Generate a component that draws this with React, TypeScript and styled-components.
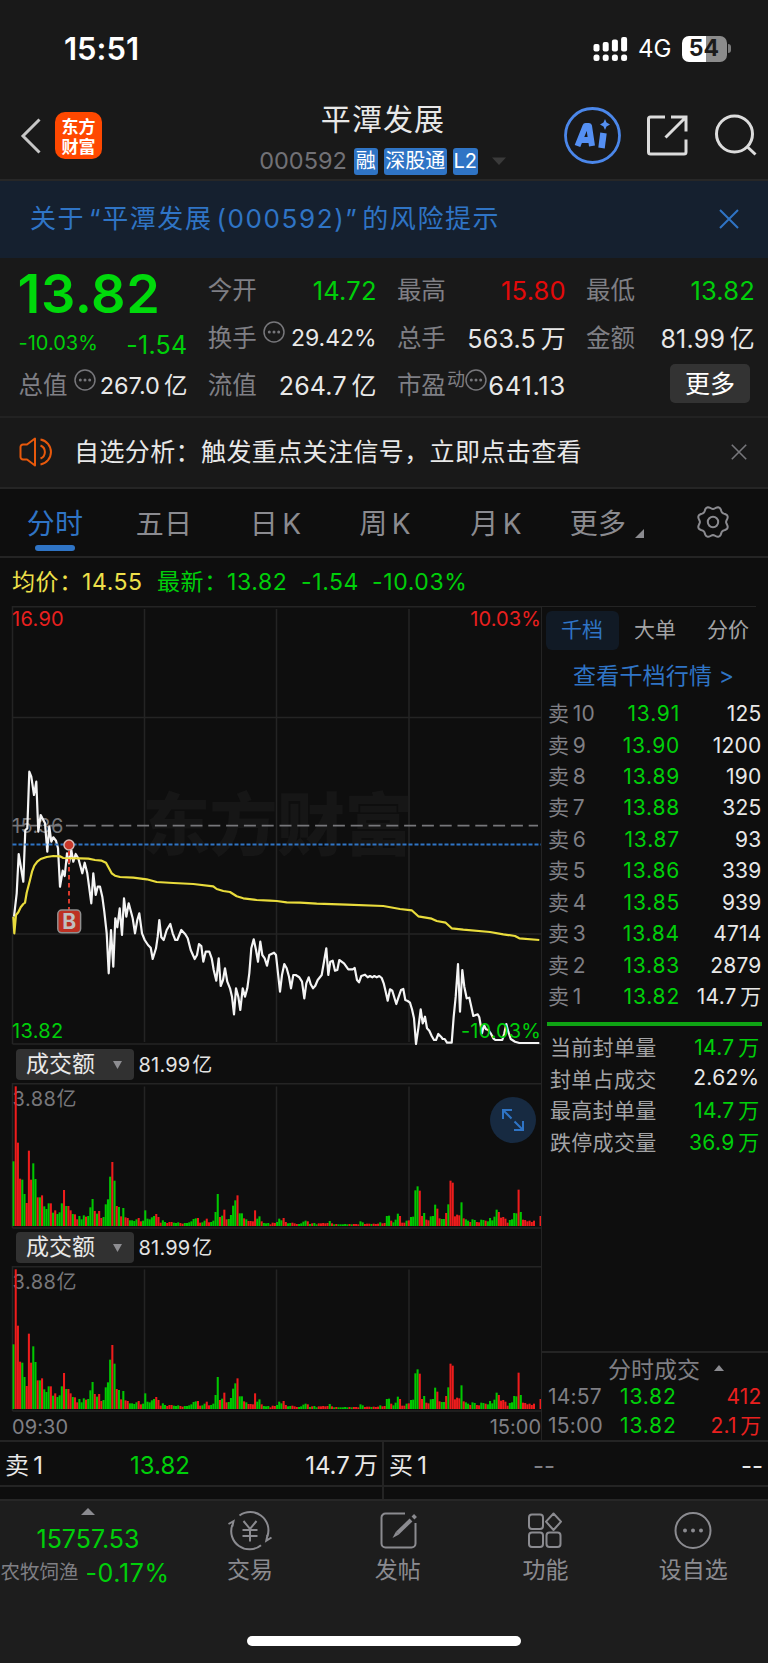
import React from 'react';
import styled, { createGlobalStyle } from 'styled-components';

const C = {
  up: '#e9201f',
  down: '#00cf0a',
  blue: '#2f74c5',
  text: '#e8e8e8',
  dim: '#7f7f84',
  line: '#242424',
  panel: '#191919',
  base: '#0e0e0e',
};

const Global = createGlobalStyle`
  * { box-sizing: border-box; }
  html, body { margin: 0; padding: 0; background: ${C.base}; }
  body { font-family: Inter, "Noto Sans CJK SC", sans-serif; font-feature-settings: "calt" 0; }
  svg { display: block; flex: none; }
`;

const Screen = styled.div`
  width: 768px;
  height: 1663px;
  overflow: hidden;
  display: flex;
  flex-direction: column;
  background: ${C.base};
  color: ${C.text};
`;

const Txt = styled.span<{ $s?: number; $c?: string; $ls?: number; $w?: number; $ws?: number; $mt?: number }>`
  font-size: ${(p) => p.$s ?? 24}px;
  color: ${(p) => p.$c ?? C.text};
  letter-spacing: ${(p) => p.$ls ?? 0}px;
  word-spacing: ${(p) => p.$ws ?? -2.5}px;
  font-weight: ${(p) => p.$w ?? 400};
  margin-top: ${(p) => p.$mt ?? 0}px;
  line-height: 1.2;
  white-space: pre;
`;
const Grow = styled.div`
  flex: 1;
`;

/* ---------- status bar ---------- */
const StatusBar = styled.div`
  height: 98px;
  flex: none;
  display: flex;
  align-items: center;
  padding: 0 37px 0 64px;
  background: ${C.panel};
`;
const StatusRight = styled.div`
  margin-left: auto;
  display: flex;
  align-items: center;
`;
const Network = styled.span`
  margin-left: 10px;
  font-size: 24px;
  line-height: 1.2;
  color: #fff;
`;
const Battery = styled.div`
  width: 45px;
  height: 26px;
  margin-left: 10px;
  border-radius: 7px;
  display: flex;
  align-items: center;
  justify-content: center;
  background: linear-gradient(90deg, #fff 0 54%, #8c8c8c 54%);
`;
const BatteryNub = styled.div`
  width: 3px;
  height: 9px;
  margin-left: 1.5px;
  border-radius: 0 3px 3px 0;
  background: #7c7c7c;
`;

/* ---------- header ---------- */
const Header = styled.div`
  height: 83px;
  flex: none;
  display: grid;
  grid-template-columns: 200px 1fr 204px;
  background: ${C.panel};
  border-bottom: 2px solid #272727;
`;
const HeaderLeft = styled.div`
  display: flex;
  gap: 14px;
  padding: 14px 0 0 20px;
`;
const Logo = styled.div`
  width: 47px;
  height: 47px;
  border-radius: 10px;
  background: #ff4800;
  display: flex;
  flex-direction: column;
  align-items: center;
  justify-content: center;
`;
const LogoLine = styled.span`
  font: 700 17px/19.5px "Noto Sans CJK SC", sans-serif;
  color: #fff;
`;
const HeaderMid = styled.div`
  display: flex;
  flex-direction: column;
  align-items: center;
  padding: 3px 0 0 2px;
`;
const CodeRow = styled.div`
  display: flex;
  align-items: center;
  margin: 10px 0 0 -1px;
  height: 28px;
`;
const Tag = styled.span<{ $w: number; $ml: number }>`
  width: ${(p) => p.$w}px;
  height: 27px;
  margin-left: ${(p) => p.$ml}px;
  border-radius: 3px;
  background: ${C.blue};
  color: #fff;
  font-size: 20px;
  line-height: 27px;
  text-align: center;
  white-space: nowrap;
`;
const HeaderRight = styled.div`
  display: flex;
  align-items: flex-start;
  padding-top: 8px;
`;

/* ---------- notice ---------- */
const Notice = styled.div`
  height: 77px;
  flex: none;
  display: flex;
  align-items: center;
  justify-content: space-between;
  padding: 0 29px 1px 30px;
  background: #15202f;
`;

/* ---------- quote stats ---------- */
const Stats = styled.div`
  height: 160px;
  flex: none;
  display: grid;
  grid-template-columns: repeat(4, 169px);
  grid-template-rows: 48px 47px 48px;
  column-gap: 20.2px;
  padding: 9px 0 0 18.5px;
  background: ${C.panel};
  border-bottom: 2px solid #222;
`;
const PriceCell = styled.div`
  grid-row: span 2;
  display: flex;
  flex-direction: column;
  padding-top: 8px;
`;
const BigPrice = styled.div`
  font-size: 54px;
  line-height: 37px;
  font-weight: 600;
  letter-spacing: 0.6px;
  color: #00d90b;
  margin-left: -1px;
`;
const ChangeRow = styled.div`
  display: flex;
  justify-content: space-between;
  align-items: center;
  margin-top: 16px;
  height: 30px;
`;
const StatCell = styled.div`
  display: flex;
  align-items: center;
  justify-content: space-between;
`;
const StatLabel = styled.div`
  display: flex;
  align-items: center;
`;
const Raised = styled.div<{ $x?: number }>`
  display: flex;
  align-items: center;
  margin: -12px 0 0 ${(p) => p.$x ?? 6}px;
`;
const MoreButton = styled.div`
  width: 80px;
  height: 39px;
  margin: 2px 5px 0 auto;
  border-radius: 5px;
  background: #333;
  display: flex;
  align-items: center;
  justify-content: center;
`;

/* ---------- signal bar ---------- */
const SignalBar = styled.div`
  height: 71px;
  flex: none;
  display: flex;
  align-items: center;
  padding: 0 21px 1px 19px;
  background: ${C.panel};
  border-bottom: 2px solid #252525;
`;

/* ---------- period tabs ---------- */
const Tabs = styled.div`
  height: 69px;
  flex: none;
  display: flex;
  border-bottom: 2px solid ${C.line};
`;
const Tab = styled.div<{ $w: number; $on?: boolean }>`
  position: relative;
  width: ${(p) => p.$w}px;
  padding-bottom: 2px;
  display: flex;
  align-items: center;
  justify-content: center;
  font-size: 28px;
  letter-spacing: 0.3px;
  word-spacing: -4px;
  white-space: pre;
  color: ${(p) => (p.$on ? C.blue : '#8b8b90')};
  &::after {
    content: '';
    display: ${(p) => (p.$on ? 'block' : 'none')};
    position: absolute;
    left: 35px;
    bottom: 5px;
    width: 40px;
    height: 6px;
    border-radius: 3px;
    background: ${C.blue};
  }
`;
const Legend = styled.div`
  height: 48px;
  flex: none;
  display: flex;
  align-items: center;
  padding-left: 12px;
`;
const LegendItem = styled.span<{ $w: number; $c: string }>`
  width: ${(p) => p.$w}px;
  color: ${(p) => p.$c};
  font-size: 23px;
  line-height: 28px;
  letter-spacing: 0.6px;
  white-space: nowrap;
`;

/* ---------- main area ---------- */
const Main = styled.div`
  height: 836px;
  flex: none;
  display: grid;
  grid-template-columns: 542px 226px;
  border-bottom: 2px solid ${C.line};
`;
const Charts = styled.div`
  display: flex;
  flex-direction: column;
  border-right: 1px solid ${C.line};
`;
const IndicatorRow = styled.div<{ $h: number; $pt: number }>`
  height: ${(p) => p.$h}px;
  display: flex;
  align-items: flex-start;
  padding: ${(p) => p.$pt}px 0 0 16px;
`;
const IndicatorPick = styled.div`
  width: 118px;
  height: 31px;
  margin-right: 4.5px;
  padding: 0 12px 0 10px;
  border-radius: 4px;
  background: #313131;
  display: flex;
  align-items: center;
  justify-content: space-between;
`;
const IndicatorValue = styled.span`
  font-size: 20px;
  line-height: 33px;
  letter-spacing: 0.2px;
  word-spacing: -4px;
  color: #e3e3e3;
`;
const VolumeBox = styled.div`
  position: relative;
`;
const Expand = styled.div`
  position: absolute;
  left: 490px;
  top: 14px;
  width: 46px;
  height: 46px;
  border-radius: 50%;
  background: #172a41;
  display: flex;
  align-items: center;
  justify-content: center;
`;
const TimeAxis = styled.div`
  display: flex;
  justify-content: space-between;
  padding: 3px 0 0 12px;
`;

/* ---------- order book ---------- */
const Side = styled.div`
  display: flex;
  flex-direction: column;
`;
const SideTabs = styled.div`
  display: flex;
  height: 45px;
  width: 214px;
  padding: 4px 0 0 3.5px;
  border-top: 1px solid ${C.line};
`;
const SideTab = styled.div<{ $on?: boolean }>`
  width: 73px;
  height: 39px;
  flex: none;
  border-radius: 6px;
  text-align: center;
  line-height: 38px;
  font-size: 21px;
  color: ${(p) => (p.$on ? C.blue : '#a3a3a5')};
  background: ${(p) => (p.$on ? '#111a25' : 'transparent')};
`;
const DepthLink = styled.div`
  height: 47px;
  padding-left: 31px;
  line-height: 50px;
  font-size: 23px;
  letter-spacing: 0.2px;
  color: ${C.blue};
  white-space: pre;
`;
const BookRow = styled.div<{ $h?: number; $mid?: number }>`
  height: ${(p) => p.$h ?? 31.45}px;
  display: grid;
  grid-template-columns: 56px ${(p) => p.$mid ?? 76}px 1fr;
  align-items: center;
  padding: 0 6.5px 0 6px;
  font-size: 21px;
  letter-spacing: 0.2px;
  word-spacing: -2.5px;
  line-height: 1.2;
  white-space: nowrap;
  & > :not(:first-child) { text-align: right; }
  & > :nth-child(2) { letter-spacing: 0.8px; }
`;
const Cell = styled.span<{ $c: string }>`
  color: ${(p) => p.$c};
`;
const GreenRule = styled.div`
  height: 4px;
  margin: 9.5px 6px 4.5px 5px;
  background: #0fa414;
`;
const InfoRow = styled.div`
  height: 31.5px;
  display: flex;
  align-items: center;
  justify-content: space-between;
  padding: 0 8.5px 0 8px;
  font-size: 21px;
  letter-spacing: 0.3px;
  word-spacing: -2.5px;
  color: #a3a3a5;
  white-space: nowrap;
`;
const Ticks = styled.div`
  margin-top: auto;
  border-top: 2px solid ${C.line};
  height: 89px;
`;
const TicksTitle = styled.div`
  height: 29px;
  display: flex;
  align-items: center;
  gap: 14px;
  padding-left: 66px;
  font-size: 23px;
  color: ${C.dim};
`;

/* ---------- best bid / ask ---------- */
const Quotes = styled.div`
  height: 56.5px;
  flex: none;
  display: grid;
  grid-template-columns: 384px 384px;
`;
const Quote = styled.div`
  display: flex;
  flex-direction: column;
  &:first-child { border-right: 2px solid ${C.line}; }
`;
const QuoteRow = styled.div<{ $pl: number; $pr: number; $mid: number }>`
  height: 45px;
  padding: 5px ${(p) => p.$pr}px 0 ${(p) => p.$pl}px;
  display: grid;
  grid-template-columns: ${(p) => p.$mid}px 1fr auto;
  align-items: center;
  border-bottom: 2px solid ${C.line};
`;

/* ---------- bottom toolbar ---------- */
const Toolbar = styled.div`
  flex: 1;
  display: flex;
  flex-direction: column;
  align-items: center;
  background: #1d1d1d;
  border-top: 2px solid #272727;
`;
const ToolRow = styled.div`
  width: 768px;
  height: 135.5px;
  display: grid;
  grid-template-columns: 176px repeat(4, 147.75px);
`;
const Tool = styled.div`
  display: flex;
  flex-direction: column;
  align-items: center;
  padding-top: 10px;
`;
const IndexTool = styled.div`
  display: flex;
  flex-direction: column;
  align-items: center;
  padding-top: 7px;
`;
const IndexLine = styled.div`
  display: flex;
  align-items: center;
  gap: 7px;
  width: 177px;
  padding-left: 1px;
  margin-top: 4px;
`;
const HomeIndicator = styled.div`
  width: 274px;
  height: 10px;
  border-radius: 5px;
  background: #fff;
`;

/* ---------- small drawings ---------- */
const Close = ({ s, c, w }: { s: number; c: string; w: number }) => (
  <svg width={s} height={s} viewBox="0 0 20 20" stroke={c} strokeWidth={w} fill="none">
    <path d="M1 1L19 19M19 1L1 19" />
  </svg>
);
const Tri = ({ w, h, c, up }: { w: number; h: number; c: string; up?: boolean }) => (
  <svg width={w} height={h} viewBox="0 0 10 10" preserveAspectRatio="none" fill={c}>
    <path d={up ? 'M5 0L10 10H0Z' : 'M0 0H10L5 10Z'} />
  </svg>
);
const DotsRing = () => (
  <svg width="22" height="22" viewBox="0 0 22 22">
    <circle cx="11" cy="11" r="10" fill="none" stroke="#77777b" strokeWidth="1.5" />
    {[6.3, 11, 15.7].map((x) => (
      <circle key={x} cx={x} cy="11" r="1.5" fill="#77777b" />
    ))}
  </svg>
);

// Gear outline: a circle whose radius swells into eight soft lobes.
const gearPath =
  Array.from({ length: 96 }, (_, i) => {
    const a = (i / 96) * Math.PI * 2;
    const r = 14.4 + 1.3 * Math.cos(8 * (a - Math.PI / 8));
    return `${i ? 'L' : 'M'}${(18 + r * Math.cos(a)).toFixed(2)} ${(18 + r * Math.sin(a)).toFixed(2)}`;
  }).join('') + 'Z';

/* ---------- chart data ---------- */
const priceA =
  '42,950 50,880 56,762 70,845 76,690 82,685 88,515 94,530 102,585 109,545 115,695 122,645 135,670 142,755 148,680 154,725 160,712 168,722 174,745 180,860 188,812 194,828 201,760 207,790 214,750 220,785 227,762 235,775 247,820 254,788 262,820 274,910 280,820 287,885 293,860 300,860 307,890 313,935 320,1000 326,1120 333,990 340,1100 346,955 352,982 359,925 366,1005 372,895 379,950 386,910 398,955 405,1000 412,960 418,940 426,1000 434,1020 444,1035 452,1043 458,1077 468,1045 473,1010 478,960 484,1012 491,1020 500,990 511,972 518,1000 526,1020 532,1020 544,990 556,1003 563,1015 572,1050 584,1077 591,1065 597,1032 604,1038 610,1085 617,1055 628,1055 635,1075 641,1110 649,1142 656,1075 662,1158 669,1140 675,1105 682,1145 690,1165 696,1190 702,1243 708,1165 715,1190 721,1230 728,1165 735,1190 742,1165 748,1120 754,1045 761,1018 768,1050 774,1085 781,1025 787,1065 794,1075 801,1097 808,1065';
const priceB =
  '12,638 18,645 24,700 30,755 36,705 43,672 50,685 57,710 63,745 70,705 77,705 88,712 96,725 103,775 109,730 116,712 122,733 129,745 136,737 143,720 155,705 162,665 169,625 175,705 181,665 188,662 195,692 202,690 208,660 222,670 235,688 248,688 254,684 261,720 267,727 274,708 285,704 293,712 300,708 307,712 313,708 320,712 328,708 335,714 341,730 347,755 353,782 360,748 367,752 379,792 386,770 393,750 400,747 406,780 413,783 420,788 426,808 432,835 438,912 445,865 452,808 458,850 465,830 471,865 478,872 485,888 492,900 498,900 505,882 513,890 518,897 524,897 531,908 545,908 551,830 557,770 564,672 570,815 577,690 583,740 590,775 598,773 604,800 610,828 623,823 628,832 636,880 642,855 648,868 655,870 662,880 670,895 676,900 697,900 703,880 709,852 715,875 722,897 735,905 748,909 808,909';
const avgA =
  '40,950 43,1000 48,945 55,937 62,922 70,912 75,908 80,878 90,840 96,815 103,797 112,785 122,777 140,771 160,768 180,769 190,774 240,775 265,776 285,780 305,782 318,788 326,803 335,820 345,827 360,831 400,833 440,838 470,846 520,849 580,852 640,859 650,867 670,873 690,876 710,889 730,895 770,900';
const avgB =
  '0,482 20,483 50,487 90,488 140,491 230,494 340,498 390,507 425,511 445,529 485,536 500,543 527,548 545,565 580,569 660,576 700,583 735,588 748,595 808,600';

// Both halves of a series are stored in third-pixel units; the second half starts at (270, 140).
const join = (a: string, b: string) => {
  const conv = (s: string, ox: number, oy: number) =>
    s.split(' ').map((p) => {
      const [x, y] = p.split(',').map(Number);
      return `${(ox + x / 3).toFixed(1)},${(oy + y / 3 - 6).toFixed(1)}`;
    });
  return [...conv(a, 0, 0), ...conv(b, 270, 140)].join(' ');
};
const pricePts = join(priceA, priceB);
const avgPts = join(avgA, avgB);

const bars =
  'g363 r138 r307 r415 g418 g461 r488 r331 r418 g369 g416 r471 g471 r465 g498 g506 g489 r489 g517 r510 g521 g516 g489 r449 g497 r497 r510 g521 r522 r537 g527 g537 g525 r529 g527 g501 g476 r512 g520 r512 r533 g530 g492 g477 g409 r365 g421 r497 g500 r528 g503 r531 r533 g540 g540 g542 g537 r533 r543 g541 g510 g535 g537 g531 g527 r521 r530 r547 g540 g545 r548 r545 r545 g547 g548 g546 r548 r550 g548 g548 g546 g543 g536 g534 r533 r547 g546 g541 r535 r546 g545 g541 g515 g461 r530 g526 r508 r537 g536 g524 g496 g480 r465 g519 g519 r534 g537 r542 r542 r543 r510 g535 g528 r543 g548 g549 g548 r552 r547 r548 g545 g535 g540 r533 r545 g549 g548 r547 r549 r551 g551 g549 g544 g541 r543 g551 r549 g548 g552 r549 r549 r548 r549 r548 g542 r549 g552 r551 g552 g552 g552 g551 g552 r551 g552 r551 r551 r552 g543 g546 r551 r550 r550 g551 r550 r551 r550 g546 r549 r548 g527 g526 r541 g546 g538 g520 r527 r547 r547 g541 r540 g530 g529 g450 g438 r451 r527 g518 r538 r540 g528 g527 g493 r505 r534 g536 g536 r518 g492 r421 r427 r528 r523 r525 g486 r534 g537 g541 r545 g537 g539 r545 r546 g538 g539 r541 g543 g533 g540 g529 g508 r515 r532 r530 r535 r547 g539 g537 g518 g519 r448 g515 r538 r539 r543 r541 r545 r541 x557 x557 r527'.split(
    ' ',
  );

const GRID_X = [144.5, 276.5, 409];

const PriceChart = () => (
  <svg width="541" height="439" viewBox="0 0 541 439" fontSize="20">
    <g stroke={C.line} strokeWidth="1.5" fill="none">
      <path d="M12.5 438V0.7H541M12.5 438H541" />
      <path d="M12.5 111.5H541M12.5 328H541" />
      {GRID_X.map((x) => (
        <path key={x} d={`M${x} 3V436`} />
      ))}
    </g>
    <text x="142" y="244" fontSize="68" fontWeight="900" letterSpacing="-0.5" fill="#161616" fontFamily="Noto Sans CJK SC">
      东方财富
    </text>
    <text x="12" y="226.5" fill="#77777b" letterSpacing="0.4">15.36</text>
    <path d="M12.5 219.7H538" stroke="#77777b" strokeWidth="1.8" strokeDasharray="12 5.8" />
    <polyline points={pricePts} fill="none" stroke="#f4f4f4" strokeWidth="2.2" strokeLinejoin="round" />
    <polyline points={avgPts} fill="none" stroke="#e9dc3c" strokeWidth="2.2" strokeLinejoin="round" />
    <path d="M12.5 238.5H541" stroke="#2f74c5" strokeWidth="2" strokeDasharray="4 2" />
    <path d="M69 245V304" stroke="#d8392b" strokeWidth="2" strokeDasharray="4.5 3.5" />
    <circle cx="69" cy="239" r="5" fill="#c8372a" stroke="#d9b9b5" strokeWidth="1.5" />
    <rect x="57.8" y="304" width="22.8" height="22.8" rx="4" fill="#bd3022" stroke="#8f8f8f" strokeWidth="1.5" />
    <text x="69.2" y="323" fontSize="21" fontWeight="700" textAnchor="middle" fill="#c0c0c0">B</text>
    <text x="12" y="20.3" fill={C.up} letterSpacing="0.3">16.90</text>
    <text x="541" y="20.3" fill={C.up} textAnchor="end" letterSpacing="0.1">10.03%</text>
    <text x="12" y="432" fill={C.down} letterSpacing="0.3">13.82</text>
    <text x="541" y="432" fill={C.down} textAnchor="end" letterSpacing="0.1">-10.03%</text>
  </svg>
);

const VolumeChart = () => (
  <svg width="541" height="146" viewBox="0 0 541 146" fontSize="20">
    <g stroke={C.line} strokeWidth="1.5" fill="none">
      <path d="M12.5 145V0.7H541M12.5 145H541" />
      {GRID_X.map((x) => (
        <path key={x} d={`M${x} 3.5V143`} />
      ))}
    </g>
    <text x="12.5" y="22.8" fill="#77777b" letterSpacing="0.5">3.88亿</text>
    {bars.map((b, i) => {
      const h = (557 - Number(b.slice(1))) / 3;
      return (
        <rect
          key={i}
          x={12.5 + i * 2.196}
          y={143 - h}
          width="2.05"
          height={h}
          fill={b[0] === 'g' ? '#00c800' : '#ee1c1c'}
        />
      );
    })}
  </svg>
);

const asks: [string, string, string][] = [
  ['10', '13.91', '125'],
  ['9', '13.90', '1200'],
  ['8', '13.89', '190'],
  ['7', '13.88', '325'],
  ['6', '13.87', '93'],
  ['5', '13.86', '339'],
  ['4', '13.85', '939'],
  ['3', '13.84', '4714'],
  ['2', '13.83', '2879'],
  ['1', '13.82', '14.7 万'],
];
const info: [string, string, string][] = [
  ['当前封单量', '14.7 万', C.down],
  ['封单占成交', '2.62%', C.text],
  ['最高封单量', '14.7 万', C.down],
  ['跌停成交量', '36.9 万', C.down],
];

const Indicator = ({ h, pt }: { h: number; pt: number }) => (
  <IndicatorRow $h={h} $pt={pt}>
    <IndicatorPick>
      <Txt $s={23}>成交额</Txt>
      <Tri w={9} h={8} c="#8d8d91" />
    </IndicatorPick>
    <IndicatorValue>81.99 亿</IndicatorValue>
  </IndicatorRow>
);

const Stat = ({
  label,
  value,
  color,
  ring,
  size = 25,
}: {
  label: string;
  value: string;
  color?: string;
  ring?: boolean;
  size?: number;
}) => (
  <StatCell>
    <StatLabel>
      <Txt $c={C.dim} $s={24.5}>{label}</Txt>
      {ring && (
        <Raised>
          <DotsRing />
        </Raised>
      )}
    </StatLabel>
    <Txt $c={color} $s={size} $ls={ring ? 0 : 0.2}>{value}</Txt>
  </StatCell>
);

const TradeIcon = () => (
  <svg width="46" height="40" viewBox="-1 0 46 40" fill="none" stroke="#8b8b90" strokeWidth="2">
    <path d="M11.5 4.5A18.2 18.2 0 0 1 39.3 25.5M33 34.2A18.2 18.2 0 0 1 4.3 14" />
    <path d="M0.5 13L5.5 10.2L4.3 15.5M43.5 26.5L38.3 29.6L39.5 24" />
    <path d="M15.5 10L22 18L28.5 10M22 18V30.5M14.5 19H29.5M14.5 25H29.5" />
  </svg>
);
const PostIcon = () => (
  <svg width="38" height="40" viewBox="0 0 38 40" fill="none" stroke="#8b8b90" strokeWidth="2">
    <path d="M26 2.5H6.5A4 4 0 0 0 2.5 6.500V32.500A4 4 0 0 0 6.500 36.500H32.500A4 4 0 0 0 36.500 32.500V12" />
    <path d="M32 9L18.500 22" strokeWidth="4" />
    <path d="M34 7L36.500 4.500" strokeWidth="4" />
    <path d="M20 23.400L13.500 27L17 20.500Z" fill="#8b8b90" stroke="none" />
  </svg>
);
const GridIcon = () => (
  <svg width="36" height="40" viewBox="0 0 36 40" fill="none" stroke="#8b8b90" strokeWidth="2">
    <rect x="2" y="3.5" width="14" height="14.5" rx="3" />
    <rect x="2" y="21.5" width="14" height="14.5" rx="3" />
    <rect x="19.5" y="21.5" width="14" height="14.5" rx="3" />
    <path d="M26.5 2.5L34 10.7L26.5 19L19 10.7Z" strokeLinejoin="round" />
  </svg>
);
const MoreIcon = () => (
  <svg width="38" height="40" viewBox="0 0 38 40">
    <circle cx="19" cy="19.5" r="17.5" fill="none" stroke="#8b8b90" strokeWidth="2" />
    {[11, 19, 27].map((x) => (
      <circle key={x} cx={x} cy="19.5" r="2" fill="#8b8b90" />
    ))}
  </svg>
);
const tools: [string, () => React.ReactElement][] = [
  ['交易', TradeIcon],
  ['发帖', PostIcon],
  ['功能', GridIcon],
  ['设自选', MoreIcon],
];

const SignalIcon = () => (
  <svg width="35" height="26" viewBox="0 0 35 26" fill="#fff">
    {[8, 6, 3.5, 1].map((y, i) => (
      <g key={y}>
        <rect x={i * 9.2 + 0.5} y={y} width="6" height={15.5 - y} rx="2" />
        <rect x={i * 9.2 + 0.5} y="18.5" width="6" height="6.5" rx="2.5" />
      </g>
    ))}
  </svg>
);

export default function App() {
  return (
    <Screen>
      <Global />
      <StatusBar>
        <Txt $s={31} $w={600} $c="#fff" $ls={0}>15:51</Txt>
        <StatusRight>
          <SignalIcon />
          <Network>4G</Network>
          <Battery>
            <Txt $s={23} $w={700} $c="#1b1b1b">54</Txt>
          </Battery>
          <BatteryNub />
        </StatusRight>
      </StatusBar>

      <Header>
        <HeaderLeft>
          <svg width="21" height="47" viewBox="0 0 21 47" fill="none" stroke="#c6c6c6" strokeWidth="3">
            <path d="M19.5 7.5L3 24L19.5 40.5" />
          </svg>
          <Logo>
            <LogoLine>东方</LogoLine>
            <LogoLine>财富</LogoLine>
          </Logo>
        </HeaderLeft>
        <HeaderMid>
          <Txt $s={30} $ls={1.1}>平潭发展</Txt>
          <CodeRow>
            <Txt $s={23.5} $c="#717176">000592</Txt>
            <Tag $w={24} $ml={7}>融</Tag>
            <Tag $w={63} $ml={6}>深股通</Tag>
            <Tag $w={25} $ml={6}>L2</Tag>
            <svg width="28" height="10" viewBox="0 0 28 10" fill="#3a3a3a">
              <path d="M14 1.5H28L21 9Z" />
            </svg>
          </CodeRow>
        </HeaderMid>
        <HeaderRight>
          <svg width="60" height="60" viewBox="0 0 60 60">
            <circle cx="28.5" cy="29.5" r="27" fill="none" stroke="#4b87ea" strokeWidth="2.8" />
            <path
              d="M13.500 40L21.500 20H25L28 40M17 34H27"
              fill="none"
              stroke="#5590f3"
              strokeWidth="6"
              strokeLinejoin="round"
            />
            <path d="M39.5 27L37.5 42" stroke="#5590f3" strokeWidth="6.5" />
            <path d="M41 13L42.5 16.500L46 18.5L42.5 20.500L41 24L39.5 20.500L36 18.5L39.5 16.500Z" fill="#5590f3" />
          </svg>
          <svg width="70" height="60" viewBox="0 0 70 60" fill="none" stroke="#dcdcdc" strokeWidth="3">
            <path
              d="M41 11.5H26.5A2 2 0 0 0 24.5 13.5V46.5A2 2 0 0 0 26.5 48.5H60A2 2 0 0 0 62 46.5V34M47 11.5H62V26M62 11.5L41.5 32"
              transform="translate(0 -0.5)"
            />
          </svg>
          <svg width="66" height="60" viewBox="0 0 66 60" fill="none" stroke="#dcdcdc" strokeWidth="3">
            <circle cx="40.5" cy="28" r="18" />
            <path d="M53.5 41L61.5 48.5" />
          </svg>
        </HeaderRight>
      </Header>

      <Notice>
        <Txt $s={26} $ls={1.6} $ws={-5} $c={C.blue}>关于 “平潭发展 (000592)” 的风险提示</Txt>
        <Close s={20} c={C.blue} w={2} />
      </Notice>

      <Stats>
        <PriceCell>
          <BigPrice>13.82</BigPrice>
          <ChangeRow>
            <Txt $s={20}  $c={C.down}>-10.03%</Txt>
            <Txt $s={25} $ls={0.3} $c={C.down} $mt={4}>-1.54</Txt>
          </ChangeRow>
        </PriceCell>
        <Stat label="今开" value="14.72" color={C.down} size={25.5} />
        <Stat label="最高" value="15.80" color="#e20a0a" size={25.5} />
        <Stat label="最低" value="13.82" color={C.down} size={25.5} />
        <Stat label="换手" value="29.42%" ring size={23} />
        <Stat label="总手" value="563.5 万" />
        <Stat label="金额" value="81.99 亿" />
        <Stat label="总值" value="267.0 亿" ring size={23.5} />
        <Stat label="流值" value="264.7 亿" />
        <StatCell>
          <StatLabel>
            <Txt $c={C.dim} $s={24.5}>市盈</Txt>
            <Raised $x={1}>
              <Txt $s={18} $c={C.dim}>动</Txt>
              <DotsRing />
            </Raised>
          </StatLabel>
          <Txt $s={25.5} $ls={0.7}>641.13</Txt>
        </StatCell>
        <MoreButton>
          <Txt $s={25} $c="#fff">更多</Txt>
        </MoreButton>
      </Stats>

      <SignalBar>
        <svg width="55" height="32" viewBox="0 0 55 32" fill="none" stroke="#e8590c" strokeWidth="2">
          <path d="M16 2.5V29.5L8 23.500H4A2.500 2.500 0 0 1 1.500 21V11A2.500 2.500 0 0 1 4 8.500H8Z" strokeLinejoin="round" />
          <path d="M21 3.500A12.700 12.700 0 0 1 21 28.500M21 9.500A7 7 0 0 1 21 22.500" transform="translate(0.500 0)" />
        </svg>
        <Txt $s={25} $ls={0.4}>自选分析：触发重点关注信号，立即点击查看</Txt>
        <Grow />
        <Close s={16} c="#77777b" w={2} />
      </SignalBar>

      <Tabs>
        <Tab $w={110} $on>分时</Tab>
        <Tab $w={108}>五日</Tab>
        <Tab $w={115}>日 K</Tab>
        <Tab $w={104}>周 K</Tab>
        <Tab $w={118}>月 K</Tab>
        <Tab $w={106}>
          更多
          <svg width="20" height="10" viewBox="0 0 20 10" fill="#8b8b90" transform="translate(0 12)">
            <path d="M18 0V9H9Z" />
          </svg>
        </Tab>
        <Tab $w={104}>
          <svg width="36" height="36" viewBox="0 0 36 36" fill="none" stroke="#8b8b90" strokeWidth="2">
            <path d={gearPath} strokeLinejoin="round" />
            <circle cx="18" cy="18" r="5.2" />
          </svg>
        </Tab>
      </Tabs>

      <Legend>
        <LegendItem $w={70} $c="#eee04a">均价：</LegendItem>
        <LegendItem $w={75} $c="#eee04a">14.55</LegendItem>
        <LegendItem $w={70} $c={C.down}>最新：</LegendItem>
        <LegendItem $w={74} $c={C.down}>13.82</LegendItem>
        <LegendItem $w={71} $c={C.down}>-1.54</LegendItem>
        <LegendItem $w={100} $c={C.down}>-10.03%</LegendItem>
      </Legend>

      <Main>
        <Charts>
          <PriceChart />
          <Indicator h={38} pt={4} />
          <VolumeBox>
            <VolumeChart />
            <Expand>
              <svg width="24" height="24" viewBox="0 0 24 24" fill="none" stroke={C.blue} strokeWidth="2">
                <path d="M2 11V2H11M2 2L10.5 10.5M22 13V22H13M22 22L13.5 13.5" />
              </svg>
            </Expand>
          </VolumeBox>
          <Indicator h={37} pt={3} />
          <VolumeChart />
          <TimeAxis>
            <Txt $s={20} $c={C.dim} $ls={0.1}>09:30</Txt>
            <Txt $s={20} $c={C.dim}>15:00</Txt>
          </TimeAxis>
        </Charts>
        <Side>
          <SideTabs>
            <SideTab $on>千档</SideTab>
            <SideTab>大单</SideTab>
            <SideTab>分价</SideTab>
          </SideTabs>
          <DepthLink>{'查看千档行情 >'}</DepthLink>
          {asks.map(([n, p, q]) => (
            <BookRow key={n}>
              <Cell $c={C.dim}>卖 {n}</Cell>
              <Cell $c={C.down}>{p}</Cell>
              <Cell $c={C.text}>{q}</Cell>
            </BookRow>
          ))}
          <GreenRule />
          {info.map(([l, v, c]) => (
            <InfoRow key={l}>
              <span>{l}</span>
              <Cell $c={c}>{v}</Cell>
            </InfoRow>
          ))}
          <Ticks>
            <TicksTitle>
              分时成交
              <Tri w={10} h={6} c="#8b8b90" up />
            </TicksTitle>
            <BookRow $h={29} $mid={72.5}>
              <Cell $c={C.dim}>14:57</Cell>
              <Cell $c={C.down}>13.82</Cell>
              <Cell $c={C.up}>412</Cell>
            </BookRow>
            <BookRow $h={29} $mid={72.5}>
              <Cell $c={C.dim}>15:00</Cell>
              <Cell $c={C.down}>13.82</Cell>
              <Cell $c={C.up}>2.1 万</Cell>
            </BookRow>
          </Ticks>
        </Side>
      </Main>

      <Quotes>
        <Quote>
          <QuoteRow $pl={5} $pr={4} $mid={125}>
            <Txt $s={24}>卖 1</Txt>
            <Txt $s={24} $c={C.down}>13.82</Txt>
            <Txt $s={24}>14.7 万</Txt>
          </QuoteRow>
        </Quote>
        <Quote>
          <QuoteRow $pl={5} $pr={5} $mid={144}>
            <Txt $s={24}>买 1</Txt>
            <Txt $s={24} $c={C.dim}>--</Txt>
            <Txt $s={24}>--</Txt>
          </QuoteRow>
        </Quote>
      </Quotes>

      <Toolbar>
        <ToolRow>
          <IndexTool>
            <Tri w={14} h={7} c="#8b8b90" up />
            <Txt $s={25} $c={C.down} $mt={9}>15757.53</Txt>
            <IndexLine>
              <Txt $s={19.5} $c={C.dim}>农牧饲渔</Txt>
              <Txt $s={25} $ls={0.6} $c={C.down}>-0.17%</Txt>
            </IndexLine>
          </IndexTool>
          {tools.map(([label, Icon]) => (
            <Tool key={label}>
              <Icon />
              <Txt $s={23} $c="#8b8b90" $mt={6}>{label}</Txt>
            </Tool>
          ))}
        </ToolRow>
        <HomeIndicator />
      </Toolbar>
    </Screen>
  );
}
